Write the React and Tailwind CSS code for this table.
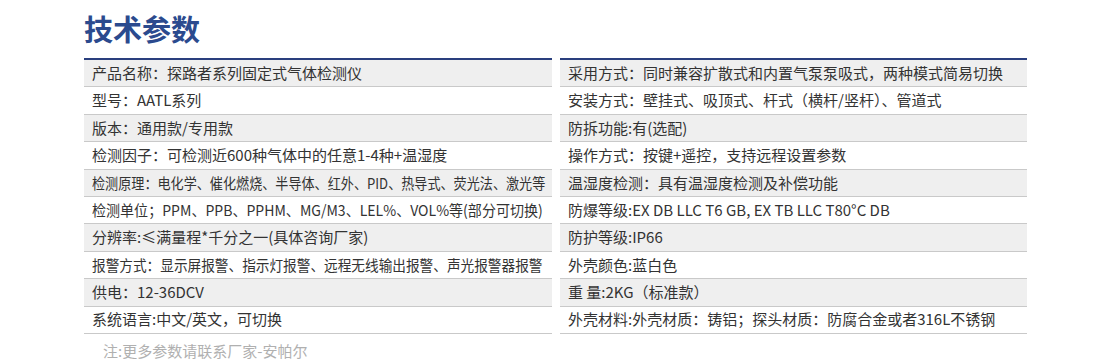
// squeeze: long rows are compressed horizontally to fit the cell
const left = [
  { text: '产品名称：探路者系列固定式气体检测仪' },
  { text: '型号：AATL系列' },
  { text: '版本：通用款/专用款' },
  { text: '检测因子：可检测近600种气体中的任意1-4种+温湿度' },
  { text: '检测原理：电化学、催化燃烧、半导体、红外、PID、热导式、荧光法、激光等', squeeze: 'scale-x-[0.873]' },
  { text: '检测单位；PPM、PPB、PPHM、MG/M3、LEL%、VOL%等(部分可切换)', squeeze: 'scale-x-[0.936]' },
  { text: '分辨率:≤满量程*千分之一(具体咨询厂家)' },
  { text: '报警方式：显示屏报警、指示灯报警、远程无线输出报警、声光报警器报警', squeeze: 'scale-x-[0.91]' },
  { text: '供电：12-36DCV' },
  { text: '系统语言:中文/英文，可切换' },
];

const right = [
  { text: '采用方式：同时兼容扩散式和内置气泵泵吸式，两种模式简易切换' },
  { text: '安装方式：壁挂式、吸顶式、杆式（横杆/竖杆）、管道式' },
  { text: '防拆功能:有(选配)' },
  { text: '操作方式：按键+遥控，支持远程设置参数' },
  { text: '温湿度检测：具有温湿度检测及补偿功能' },
  { text: '防爆等级:EX DB LLC T6 GB, EX TB LLC T80°C DB' },
  { text: '防护等级:IP66' },
  { text: '外壳颜色:蓝白色' },
  { text: '重 量:2KG（标准款）' },
  { text: '外壳材料:外壳材质：铸铝；探头材质：防腐合金或者316L不锈钢' },
];

const SpecColumn = ({ rows, width }) => (
  <div className={`${width} shrink-0 border-t-2 border-[#2a3f7e]`}>
    {rows.map((row, i) => (
      <div
        key={i}
        className={`h-[27.4px] flex items-center pl-[8px] pr-[4px] border-b border-[#c9c9c9] text-[15px] text-[#333] whitespace-nowrap overflow-hidden ${
          i % 2 === 0 ? 'bg-[#efefef]' : 'bg-white'
        }`}
      >
        <span className={`inline-block origin-left ${row.squeeze || ''}`}>{row.text}</span>
      </div>
    ))}
  </div>
);

export default function App() {
  return (
    <div
      className="w-[1109px] h-[359px] bg-white overflow-hidden pl-[84px] pt-[8px]"
      style={{ fontFamily: '"Noto Sans CJK SC", "Noto Sans", sans-serif' }}
    >
      <h1 className="text-[29px] leading-[40px] font-bold text-[#2b4a8e]">技术参数</h1>
      <div className="mt-[10px] flex gap-[8px]">
        <SpecColumn rows={left} width="w-[468px]" />
        <SpecColumn rows={right} width="w-[467px]" />
      </div>
      <p className="mt-[8px] pl-[19px] text-[15px] leading-[18px] text-[#b0b0b0]">注:更多参数请联系厂家-安帕尔</p>
    </div>
  );
}
